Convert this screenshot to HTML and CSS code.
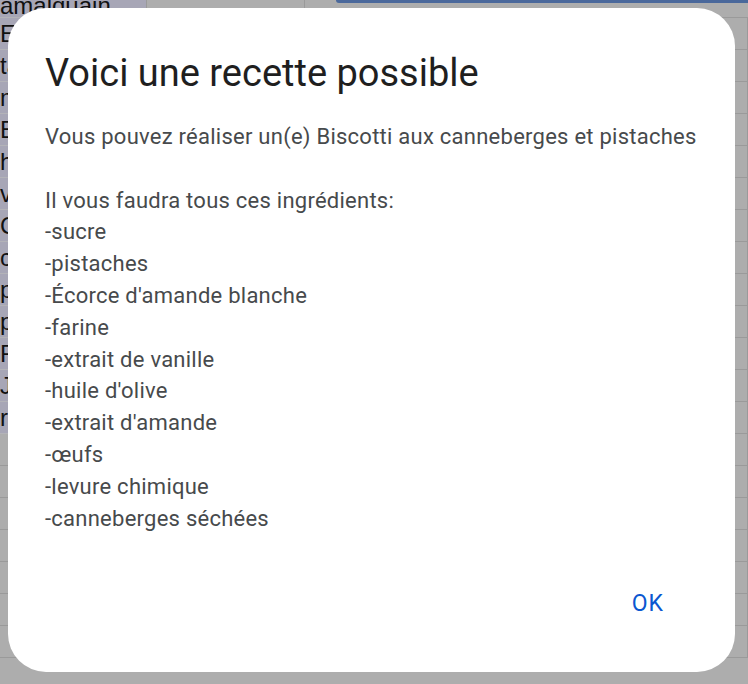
FILE: index.html
```html
<!DOCTYPE html>
<html lang="fr">
<head>
<meta charset="utf-8">
<title>Voici une recette possible</title>
<link rel="stylesheet" href="styles.css">
</head>
<body>
<div class="sheet">
  <div class="cell a top"><span class="clip">amalquain</span></div>
  <div class="cell top"></div>
  <div class="cell top span3"><div class="bluebar"></div></div>
  <div class="cell a">E</div><div class="cell"></div><div class="cell"></div><div class="cell"></div><div class="cell"></div>
  <div class="cell a">ta</div><div class="cell"></div><div class="cell"></div><div class="cell"></div><div class="cell"></div>
  <div class="cell a">m</div><div class="cell"></div><div class="cell"></div><div class="cell"></div><div class="cell"></div>
  <div class="cell a">B</div><div class="cell"></div><div class="cell"></div><div class="cell"></div><div class="cell"></div>
  <div class="cell a">h</div><div class="cell"></div><div class="cell"></div><div class="cell"></div><div class="cell"></div>
  <div class="cell a">vi</div><div class="cell"></div><div class="cell"></div><div class="cell"></div><div class="cell"></div>
  <div class="cell a">C</div><div class="cell"></div><div class="cell"></div><div class="cell"></div><div class="cell"></div>
  <div class="cell a">c</div><div class="cell"></div><div class="cell"></div><div class="cell"></div><div class="cell"></div>
  <div class="cell a">p</div><div class="cell"></div><div class="cell"></div><div class="cell"></div><div class="cell"></div>
  <div class="cell a">p</div><div class="cell"></div><div class="cell"></div><div class="cell"></div><div class="cell"></div>
  <div class="cell a">F</div><div class="cell"></div><div class="cell"></div><div class="cell"></div><div class="cell"></div>
  <div class="cell a">Ja</div><div class="cell"></div><div class="cell"></div><div class="cell"></div><div class="cell"></div>
  <div class="cell a">r</div><div class="cell"></div><div class="cell"></div><div class="cell"></div><div class="cell"></div>
  <div class="cell"></div><div class="cell"></div><div class="cell"></div><div class="cell"></div><div class="cell"></div>
  <div class="cell"></div><div class="cell"></div><div class="cell"></div><div class="cell"></div><div class="cell"></div>
  <div class="cell"></div><div class="cell"></div><div class="cell"></div><div class="cell"></div><div class="cell"></div>
  <div class="cell"></div><div class="cell"></div><div class="cell"></div><div class="cell"></div><div class="cell"></div>
  <div class="cell"></div><div class="cell"></div><div class="cell"></div><div class="cell"></div><div class="cell"></div>
  <div class="cell"></div><div class="cell"></div><div class="cell"></div><div class="cell"></div><div class="cell"></div>
  <div class="cell"></div><div class="cell"></div><div class="cell"></div><div class="cell"></div><div class="cell"></div>
</div>

<div class="dialog" role="dialog">
  <h1 class="title">Voici une recette possible</h1>
  <div class="body">Vous pouvez réaliser un(e) Biscotti aux canneberges et pistaches

Il vous faudra tous ces ingrédients:
-sucre
-pistaches
-Écorce d'amande blanche
-farine
-extrait de vanille
-huile d'olive
-extrait d'amande
-œufs
-levure chimique
-canneberges séchées</div>
  <div class="actions">
    <button class="ok">OK</button>
  </div>
</div>
</body>
</html>
```
FILE: styles.css
```css
html, body {
  margin: 0;
  padding: 0;
  height: 100%;
}
body {
  background: #adadad;
  overflow: hidden;
  font-family: Roboto, "Liberation Sans", Arial, sans-serif;
}
.sheet {
  display: grid;
  grid-template-columns: 147px 158px 161px 159px 123px;
  grid-template-rows: 18px;
  grid-auto-rows: 32px;
}
.cell {
  box-sizing: border-box;
  border-right: 1px solid #9a9a9a;
  border-bottom: 1px solid #9a9a9a;
  font-family: "Liberation Sans", Arial, sans-serif;
  font-size: 24px;
  color: #111;
  line-height: 31px;
  overflow: hidden;
}
.cell.a {
  background: #a7a6b6;
  border-bottom-color: #b3b3b8;
}
.cell.top {
  line-height: 18px;
}
.clip {
  display: block;
  margin-top: -6px;
  line-height: 24px;
}
.span3 {
  grid-column: 3 / 6;
  border-right: none;
}
.bluebar {
  margin-left: 31px;
  height: 3px;
  background: #4a689b;
  border-bottom-left-radius: 3px;
}
.dialog {
  position: absolute;
  left: 8px;
  top: 8px;
  width: 727px;
  height: 664px;
  box-sizing: border-box;
  background: #fff;
  border-radius: 38px;
  padding: 45px 20px 0 37px;
  display: flex;
  flex-direction: column;
}
.title {
  margin: 0;
  font-weight: 400;
  font-size: 38px;
  line-height: 40px;
  color: #1f1f1f;
}
.body {
  margin-top: 28px;
  white-space: pre;
  font-size: 22px;
  letter-spacing: 0.25px;
  line-height: 31.8px;
  color: #474a4c;
}
.actions {
  margin-top: auto;
  margin-bottom: 48px;
  display: flex;
  justify-content: flex-end;
}
.ok {
  border: none;
  background: none;
  font-family: Roboto, "Liberation Sans", Arial, sans-serif;
  font-size: 23px;
  font-weight: 400;
  letter-spacing: 1px;
  color: #0b57d0;
  padding: 8px 51px 8px 20px;
  line-height: 24px;
}
```
